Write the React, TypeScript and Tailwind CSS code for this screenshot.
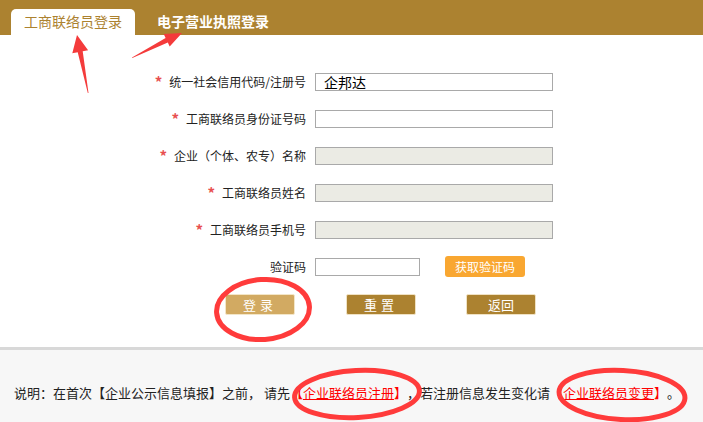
import React from "react";

const font = { fontFamily: '"Noto Sans CJK SC", "Noto Sans", sans-serif' };

function Row({ label, star = true, children }: { label: string; star?: boolean; children: React.ReactNode }) {
  return (
    <div className="flex h-[37px] items-center">
      <div className="flex w-[306px] items-center justify-end text-[12px] text-[#222]">
        {star && <span className="mr-[7px] text-[15px] font-bold leading-none text-[#e85050]">*</span>}
        <span>{label}</span>
      </div>
      <div className="ml-[9px] flex items-center">{children}</div>
    </div>
  );
}

function Input({ disabled = false, value = "", w = "w-[238px]" }: { disabled?: boolean; value?: string; w?: string }) {
  return (
    <div
      className={`${w} h-[18px] border border-[#a9a9a9] ${disabled ? "bg-[#ebebe4]" : "bg-white"} pl-[8px] text-[14px] leading-[16px] text-black`}
    >
      {value}
    </div>
  );
}

export default function App() {
  return (
    <div className="relative flex h-[422px] w-[703px] flex-col overflow-hidden bg-white [text-spacing-trim:space-all]" style={font}>
      <div className="flex h-[35px] items-end bg-[#ac8230] pl-[11px]">
        <div className="flex h-[26px] w-[124px] items-center justify-center rounded-t-[5px] bg-white pb-[1px] text-[14px] text-[#ac8230]">
          工商联络员登录
        </div>
        <div className="ml-[22px] flex h-[26px] items-center pb-[1px] text-[14px] font-bold text-white">电子营业执照登录</div>
      </div>
      <div className="flex h-[312px] flex-col pt-[28px]">
        <Row label="统一社会信用代码/注册号">
          <Input value="企邦达" />
        </Row>
        <Row label="工商联络员身份证号码">
          <Input />
        </Row>
        <Row label="企业（个体、农专）名称">
          <Input disabled />
        </Row>
        <Row label="工商联络员姓名">
          <Input disabled />
        </Row>
        <Row label="工商联络员手机号">
          <Input disabled />
        </Row>
        <Row label="验证码" star={false}>
          <Input w="w-[105px]" />
          <div className="ml-[25px] flex h-[21px] w-[80px] items-center justify-center rounded-[3px] bg-[#f9a731] text-[12px] text-white">
            获取验证码
          </div>
        </Row>
        <div className="mt-[9px] flex pl-[225px]">
          <div className="flex h-[21px] w-[70px] items-center justify-center rounded-[2px] border border-[#f3e6c8] bg-[#d2aa62] text-[13px] tracking-[4px] text-white">
            登录
          </div>
          <div className="ml-[51px] flex h-[21px] w-[70px] items-center justify-center rounded-[2px] border border-[#f0e2c4] bg-[#ac8230] text-[13px] tracking-[4px] text-white">
            重置
          </div>
          <div className="ml-[50px] flex h-[21px] w-[70px] items-center justify-center rounded-[2px] border border-[#f0e2c4] bg-[#ac8230] text-[13px] text-white">
            返回
          </div>
        </div>
      </div>
      <div className="h-[3px] bg-[#d8d8d8]" />
      <div className="flex-1 bg-[#f7f7f7] pl-[14px] pt-[33px] text-[13px] leading-[20px] text-[#222]">
        说明：在首次【企业公示信息填报】之前， 请先<span className="text-[#ff0000]">【<span className="underline">企业联络员注册</span>】</span>，若注册信息发生变化请<span className="text-[#ff0000]">【<span className="underline">企业联络员变更</span>】</span>。
      </div>
      <svg className="pointer-events-none absolute left-0 top-0" width="703" height="422" viewBox="0 0 703 422">
        <polygon points="88.5,93 82.7,51.2 88.1,50.2 77,35 72.3,53.2 77.7,52.2 87.8,93" fill="#f43b3b" />
        <polygon points="132,57.5 165.6,38 163.7,34 182,33 169.7,46.6 167.8,42.6 132.3,58" fill="#f43b3b" />
        <ellipse cx="263" cy="309.5" rx="46.5" ry="30" fill="none" stroke="#ff3b3b" strokeWidth="5" transform="rotate(-4 263 309.5)" />
        <ellipse cx="357" cy="394" rx="62.5" ry="23.5" fill="none" stroke="#ff3b3b" strokeWidth="5" transform="rotate(-3 357 394)" />
        <ellipse cx="622" cy="395" rx="63" ry="24.5" fill="none" stroke="#ff3b3b" strokeWidth="5" transform="rotate(3 622 395)" />
      </svg>
    </div>
  );
}
